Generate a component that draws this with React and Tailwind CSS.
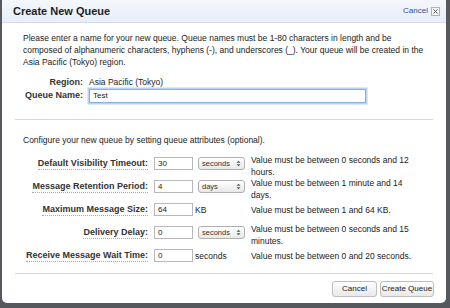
import React from "react";

const rows = [
  { label: "Default Visibility Timeout:", value: "30", unit: "select", unitText: "seconds", help: ["Value must be between 0 seconds and 12", "hours."] },
  { label: "Message Retention Period:", value: "4", unit: "select", unitText: "days", help: ["Value must be between 1 minute and 14", "days."] },
  { label: "Maximum Message Size:", value: "64", unit: "text", unitText: "KB", help: ["Value must be between 1 and 64 KB."] },
  { label: "Delivery Delay:", value: "0", unit: "select", unitText: "seconds", help: ["Value must be between 0 seconds and 15", "minutes."] },
  { label: "Receive Message Wait Time:", value: "0", unit: "text", unitText: "seconds", help: ["Value must be between 0 and 20 seconds."] },
];

function Arrows() {
  return (
    <svg width="5" height="7" viewBox="0 0 5 7" className="shrink-0">
      <path d="M0.5 2.8 L2.5 0.8 L4.5 2.8 Z M0.5 4.2 L2.5 6.2 L4.5 4.2 Z" fill="#555" />
    </svg>
  );
}

function FieldRow({ row }) {
  const oneLine = row.help.length === 1;
  return (
    <div className="flex items-start h-[23px]">
      <div className="w-[146px] flex justify-end pt-[4px]">
        <span className="font-bold text-[9px] text-[#333] leading-[11px] border-b border-dotted border-[#aaa]">{row.label}</span>
      </div>
      <div className="ml-[6px] mt-[3px] w-[39px] h-[13px] border border-[#b8b8b8] bg-white text-[8px] leading-[11px] pl-[3px] text-[#222]">
        {row.value}
      </div>
      {row.unit === "select" ? (
        <div className="ml-[5px] mt-[3px] w-[47px] h-[13px] border border-[#b0b0b0] rounded-[3px] bg-gradient-to-b from-white to-[#e8e8e8] flex items-center justify-between px-[3px] text-[7.5px] text-[#333]">
          <span>{row.unitText}</span>
          <Arrows />
        </div>
      ) : (
        <div className="ml-[2px] w-[50px] pt-[4px] leading-[12px] text-[#222]">{row.unitText}</div>
      )}
      <div className={oneLine ? "ml-[6px] pt-[4px] leading-[12px] text-[#222]" : "ml-[6px] leading-[12px] text-[#222]"}>
        {row.help.map((h) => (
          <div key={h}>{h}</div>
        ))}
      </div>
    </div>
  );
}

export default function App() {
  return (
    <div
      className="w-[450px] h-[308px] bg-[#55595e] overflow-hidden"
      style={{ fontFamily: '"Liberation Sans", Arial, sans-serif' }}
    >
      <div className="ml-[2px] w-[444px] h-[303px] bg-white rounded-b-[5px] flex flex-col text-[8.5px]">
        <div className="h-[23px] shrink-0 bg-gradient-to-b from-[#f4f7fc] to-[#e7eef8] border-b border-[#d3dbe6] flex items-center justify-between pl-[11px] pr-[6px]">
          <span className="font-bold text-[11px] text-[#1e1e1e]">Create New Queue</span>
          <div className="flex items-center gap-[3px]">
            <span className="text-[8px] text-[#2a4f9a]">Cancel</span>
            <span className="w-[9px] h-[9px] border border-[#a9b3c2] bg-[#f3f5f8] flex items-center justify-center">
              <svg width="5" height="5" viewBox="0 0 5 5">
                <path d="M0.5 0.5 L4.5 4.5 M4.5 0.5 L0.5 4.5" stroke="#555" strokeWidth="1" />
              </svg>
            </span>
          </div>
        </div>

        <div className="pl-[21px] pr-[20px] pt-[9px] leading-[12px] text-[#222]">
          Please enter a name for your new queue. Queue names must be 1-80 characters in length and be composed of alphanumeric characters, hyphens (-), and underscores (_). Your queue will be created in the Asia Pacific (Tokyo) region.
        </div>

        <div className="mt-[8px] flex items-center leading-[12px]">
          <div className="w-[81px] text-right font-bold text-[9px] text-[#333]">Region:</div>
          <div className="ml-[6px] text-[#222]">Asia Pacific (Tokyo)</div>
        </div>
        <div className="mt-[1px] flex items-center">
          <div className="w-[81px] text-right font-bold text-[9px] text-[#333]">Queue Name:</div>
          <div className="ml-[6px] w-[277px] h-[14px] border border-[#86b1e6] shadow-[0_0_0_1.5px_#b9d3f3] bg-white text-[8px] leading-[12px] pl-[3px] text-[#222]">
            Test
          </div>
        </div>

        <div className="mt-[16px] mx-[13px] h-px bg-[#d6d6d6]" />

        <div className="mt-[14px] pl-[21px] leading-[12px] text-[#222]">
          Configure your new queue by setting queue attributes (optional).
        </div>

        <div className="mt-[8px] flex flex-col">
          {rows.map((r) => (
            <FieldRow key={r.label} row={r} />
          ))}
        </div>

        <div className="mt-[4px] mx-[13px] h-px bg-[#d6d6d6]" />

        <div className="mt-[7px] flex justify-end gap-[3px] pr-[12px]">
          <button className="w-[45px] h-[16px] border border-[#bdbdbd] rounded-[3px] bg-gradient-to-b from-white to-[#e9e9e9] text-[8px] text-[#222]">
            Cancel
          </button>
          <button className="w-[54px] h-[16px] border border-[#bdbdbd] rounded-[3px] bg-gradient-to-b from-white to-[#e9e9e9] text-[8px] text-[#222]">
            Create Queue
          </button>
        </div>
      </div>
    </div>
  );
}
